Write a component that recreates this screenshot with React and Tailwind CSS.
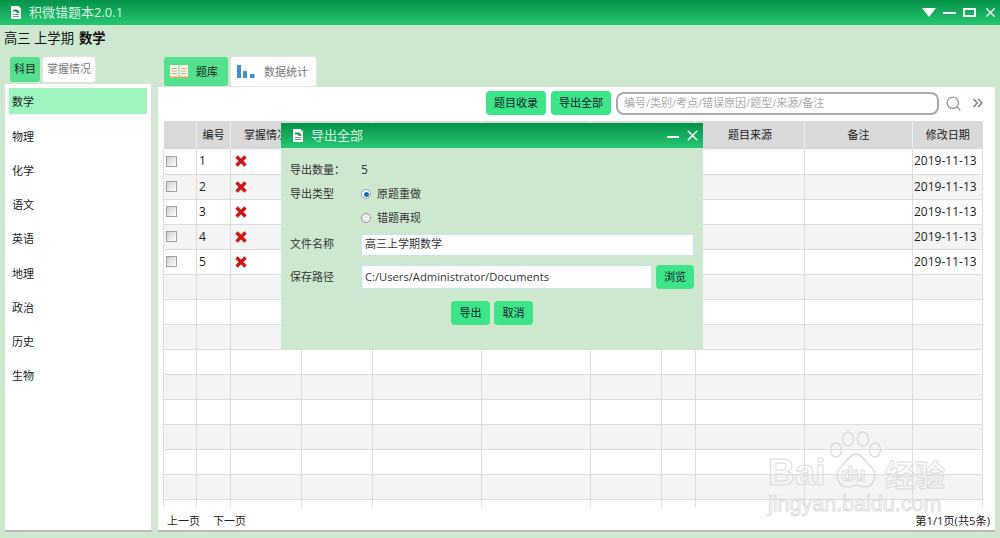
import { Search, ChevronsRight, X } from 'lucide-react';

const subjects = ['数学', '物理', '化学', '语文', '英语', '地理', '政治', '历史', '生物'];
const columns = [
  { w: 'w-[33px]', label: '' },
  { w: 'w-[34px]', label: '编号' },
  { w: 'w-[71px]', label: '掌握情况' },
  { w: 'w-[71px]', label: '' },
  { w: 'w-[109px]', label: '' },
  { w: 'w-[109px]', label: '' },
  { w: 'w-[71px]', label: '' },
  { w: 'w-[34px]', label: '' },
  { w: 'w-[109px]', label: '题目来源' },
  { w: 'w-[108px]', label: '备注' },
  { w: 'w-[70px]', label: '修改日期' },
];
const rows = Array.from({ length: 15 }, (_, i) => i);

function DocIcon({ className }) {
  return (
    <svg className={className} viewBox="0 0 10 13">
      <path d="M0 0h7.500L10 2.500V13H0z" fill="#fff" />
      <path d="M2 3.500h4l2 1.500v2H6L4.500 5.500H2z" fill="#1f9d55" />
      <path d="M2 8h6v1H2zM2 10h6v1H2z" fill="#7d8f86" />
    </svg>
  );
}

function GreenButton({ children, className = '' }) {
  return (
    <button className={`h-6 rounded-[4px] bg-[#3de588] text-[11px] text-[#123] ${className}`}>{children}</button>
  );
}

function App() {
  return (
    <div className="relative flex h-[538px] w-[1000px] flex-col overflow-hidden bg-[#cde8cf] text-[11px] text-[#222] font-['Open_Sans','Noto_Sans_CJK_SC',sans-serif]">
      {/* Title bar */}
      <div className="flex h-[25px] items-center bg-gradient-to-b from-[#03914a] to-[#25c872] pl-[11px] pr-[2px] text-white">
        <DocIcon className="h-[13px] w-[10px]" />
        <span className="ml-[8px] text-[13px] text-[#d8f5e2]">积微错题本2.0.1</span>
        <div className="ml-auto flex items-center gap-[7px]">
          <svg className="h-[9px] w-[14px]" viewBox="0 0 14 9"><path d="M0 0h14L7 9z" fill="#fff" /></svg>
          <div className="mt-[1px] h-[2px] w-[13px] bg-white" />
          <div className="h-[9px] w-[13px] border-2 border-white" />
          <X className="h-[15px] w-[15px] text-white" strokeWidth={2} />
        </div>
      </div>

      {/* Term line */}
      <div className="flex h-[28px] items-center pl-[4px] text-[13.300px] text-[#111]">
        高三 上学期 <span className="ml-[5px] font-bold">数学</span>
      </div>

      <div className="flex min-h-0 flex-1 pb-[6px] pl-[5px] pr-[5px] pt-[4px]">
        {/* Left column */}
        <div className="flex w-[148px] flex-col">
          <div className="flex h-[27px] items-start gap-[3px] pl-[5px]">
            <div className="flex h-[25px] w-[30px] items-center justify-center rounded-[3px] bg-[#54e08f]">科目</div>
            <div className="flex h-[25px] w-[52px] items-center justify-center rounded-[3px] bg-white text-[#777] shadow-[0_0_0_1px_#e4e4e4]">掌握情况</div>
          </div>
          <div className="flex-1 border-b-2 border-r-2 border-b-[#b9b9b9] border-r-[#dfdfdf] bg-white px-[4px] pt-[4px]">
            {subjects.map((s, i) => (
              <div key={s} className={`flex h-[26px] items-center pl-[3px] pt-[3px] ${i === 0 ? 'bg-[#9ef5c0]' : ''} ${i > 0 ? 'mt-[8.250px]' : ''}`}>
                {s}
              </div>
            ))}
          </div>
        </div>

        {/* Right column */}
        <div className="ml-[5px] flex min-w-0 flex-1 flex-col">
          <div className="flex h-[30px] items-start gap-[3px] pl-[6px]">
            <div className="flex h-[29px] w-[64px] items-center rounded-[3px] bg-[#54e08f] pl-[6px]">
              <svg className="h-[13px] w-[18px]" viewBox="0 0 18 13">
                <path d="M0 0h8.500v13H0zM9.500 0H18v13H9.500z" fill="#fbf3e3" />
                <path d="M0 11.500h8.500V13H0zM9.500 11.500H18V13H9.500z" fill="#e8a05c" />
                <path d="M1.500 3h5.500v1H1.500zM1.500 5.500h5.500v1H1.500zM1.500 8h5.500v1H1.500zM11 3h5.500v1H11zM11 5.500h5.500v1H11zM11 8h5.500v1H11z" fill="#b8ad98" />
              </svg>
              <span className="ml-[8px] mt-[2px]">题库</span>
            </div>
            <div className="flex h-[29px] w-[85px] items-center rounded-[3px] bg-white pl-[6px] text-[#777] shadow-[0_0_0_1px_#e4e4e4]">
              <svg className="h-[13px] w-[18px]" viewBox="0 0 18 13">
                <path d="M0 0h4v13H0zM6 6h4v7H6zM13 9h4.500v4H13z" fill="#3f8fd6" />
              </svg>
              <span className="ml-[9px] mt-[2px]">数据统计</span>
            </div>
          </div>

          <div className="relative flex min-h-0 flex-1 flex-col border-b-2 border-b-[#b9b9b9] bg-white pl-[5px] pr-[5px]">
            {/* Toolbar */}
            <div className="flex h-[34px] shrink-0 items-center justify-end pb-[2px]">
              <GreenButton className="w-[60px]">题目收录</GreenButton>
              <GreenButton className="ml-[5px] w-[60px]">导出全部</GreenButton>
              <div className="ml-[5px] flex h-[23px] w-[323px] items-center rounded-[8px] border-2 border-[#a9a9a9] pl-[6px] text-[#aaa]">
                编号/类别/考点/错误原因/题型/来源/备注
              </div>
              <Search className="ml-[6px] h-[17px] w-[17px] text-[#999]" strokeWidth={2} />
              <ChevronsRight className="ml-[8px] mr-[4px] h-[16px] w-[16px] text-[#888]" strokeWidth={2.500} />
            </div>

            {/* Table */}
            <div className="min-h-0 flex-1 overflow-hidden">
              <table className="w-[819px] table-fixed border-collapse">
                <colgroup>
                  {columns.map((c, i) => <col key={i} className={c.w} />)}
                </colgroup>
                <thead>
                  <tr className="h-[28px] bg-[#d9d9d9]">
                    {columns.map((c, i) => (
                      <th key={i} className="border-r border-r-[#eeeeee] text-center text-[11px] font-normal last:border-r-0">{c.label}</th>
                    ))}
                  </tr>
                </thead>
                <tbody>
                  {rows.map(i => (
                    <tr key={i} className={`h-[25px] border-b border-b-[#dcdcdc] ${i % 2 === 1 ? 'bg-[#f4f4f4]' : 'bg-white'}`}>
                      {columns.map((c, j) => (
                        <td key={j} className="border-x border-x-[#dcdcdc] p-0">
                          {i < 5 && j === 0 && (
                            <div className="ml-[2px] h-[11px] w-[11px] border border-[#a0a0a0] bg-gradient-to-br from-[#cfcfcf] to-white" />
                          )}
                          {i < 5 && j === 1 && <span className="pl-[2px] text-[12px]">{i + 1}</span>}
                          {i < 5 && j === 2 && (
                            <svg className="ml-[4px] h-[12px] w-[12px]" viewBox="0 0 12 12">
                              <path d="M1.500 1.500l9 9M10.500 1.500l-9 9" stroke="#d11616" strokeWidth="3.400" />
                            </svg>
                          )}
                          {i < 5 && j === 10 && <span className="pl-[1px] text-[12px] whitespace-nowrap">2019-11-13</span>}
                        </td>
                      ))}
                    </tr>
                  ))}
                </tbody>
              </table>
            </div>

            {/* Pager */}
            <div className="flex h-[23px] shrink-0 items-center justify-between pl-[4px] pt-[6px]">
              <div className="flex gap-[13px]"><span>上一页</span><span>下一页</span></div>
              <span className="text-[11.200px]">第1/1页(共5条)</span>
            </div>
          </div>
        </div>
      </div>

      {/* Export dialog */}
      <div className="absolute left-[281px] top-[123px] h-[227px] w-[422px] bg-[#cde8cf]">
        <div className="flex h-[25px] items-center bg-gradient-to-b from-[#03914a] to-[#25c872] pl-[12px] pr-[2px]">
          <DocIcon className="h-[13px] w-[10px]" />
          <span className="ml-[8px] text-[13px] text-[#d8f5e2]">导出全部</span>
          <div className="ml-auto mt-[2px] h-[2px] w-[12px] bg-white" />
          <X className="ml-[5px] h-[17px] w-[17px] text-white" strokeWidth={2} />
        </div>
        <div className="px-[9px] text-[#333]">
          <div className="mt-[14px] flex h-[16px] items-center"><span className="w-[71px]">导出数量：</span><span className="text-[12px]">5</span></div>
          <div className="mt-[8px] flex h-[16px] items-center">
            <span className="w-[71px]">导出类型</span>
            <span className="flex h-[10px] w-[10px] items-center justify-center rounded-full border border-[#8aa0b8] bg-white">
              <span className="h-[5px] w-[5px] rounded-full bg-[#0f6fc6]" />
            </span>
            <span className="ml-[6px]">原题重做</span>
          </div>
          <div className="mt-[8px] flex h-[16px] items-center pl-[71px]">
            <span className="h-[10px] w-[10px] rounded-full border border-[#999] bg-[#eee]" />
            <span className="ml-[6px]">错题再现</span>
          </div>
          <div className="mt-[7px] flex h-[23px] items-center">
            <span className="w-[71px]">文件名称</span>
            <div className="flex h-[22px] w-[333px] items-center border border-[#c3e3ee] bg-white pl-[3px]">高三上学期数学</div>
          </div>
          <div className="mt-[9px] flex h-[24px] items-center">
            <span className="w-[71px]">保存路径</span>
            <div className="flex h-[24px] w-[291px] items-center border border-[#c3e3ee] bg-white pl-[3px] text-[11.200px]">C:/Users/Administrator/Documents</div>
            <GreenButton className="ml-[4px] w-[38px]">浏览</GreenButton>
          </div>
          <div className="mt-[12px] flex justify-center gap-[4px]">
            <GreenButton className="w-[39px]">导出</GreenButton>
            <GreenButton className="w-[39px]">取消</GreenButton>
          </div>
        </div>
      </div>

      {/* Baidu watermark */}
      <div className="pointer-events-none absolute left-[765px] top-[430px] h-[84px] w-[225px]">
        <svg className="absolute left-[63px] top-0 h-[62px] w-[56px]" viewBox="0 0 56 62" fill="none" stroke="#dcdcdc" strokeWidth="1.500">
          <ellipse cx="8" cy="20" rx="5.500" ry="7" />
          <ellipse cx="20" cy="9" rx="5.500" ry="7" />
          <ellipse cx="35" cy="9" rx="5.500" ry="7" />
          <ellipse cx="47" cy="20" rx="5.500" ry="7" />
          <path d="M28 24c-7 0-9 8-15 13-7 6-4 20 7 20 4 0 6-2 8-2s4 2 8 2c11 0 14-14 7-20-6-5-8-13-15-13z" />
        </svg>
        <span className="absolute left-[3px] top-[22px] text-[37px] font-bold leading-[42px] text-transparent [-webkit-text-stroke:1px_#dcdcdc] font-['Liberation_Sans',sans-serif]">Bai</span>
        <span className="absolute left-[76px] top-[32px] text-[20px] font-bold leading-[24px] text-transparent [-webkit-text-stroke:1px_#dcdcdc] font-['Liberation_Sans',sans-serif]">du</span>
        <span className="absolute left-[120px] top-[24px] text-[30px] font-bold leading-[38px] text-transparent [-webkit-text-stroke:1px_#dcdcdc] font-['Noto_Sans_CJK_SC',sans-serif]">经验</span>
        <span className="absolute left-[3px] top-[65px] text-[21.500px] leading-[18px] text-transparent [-webkit-text-stroke:1px_#dcdcdc] font-['Liberation_Sans',sans-serif]">jingyan.baidu.com</span>
      </div>
    </div>
  );
}

export default App;
